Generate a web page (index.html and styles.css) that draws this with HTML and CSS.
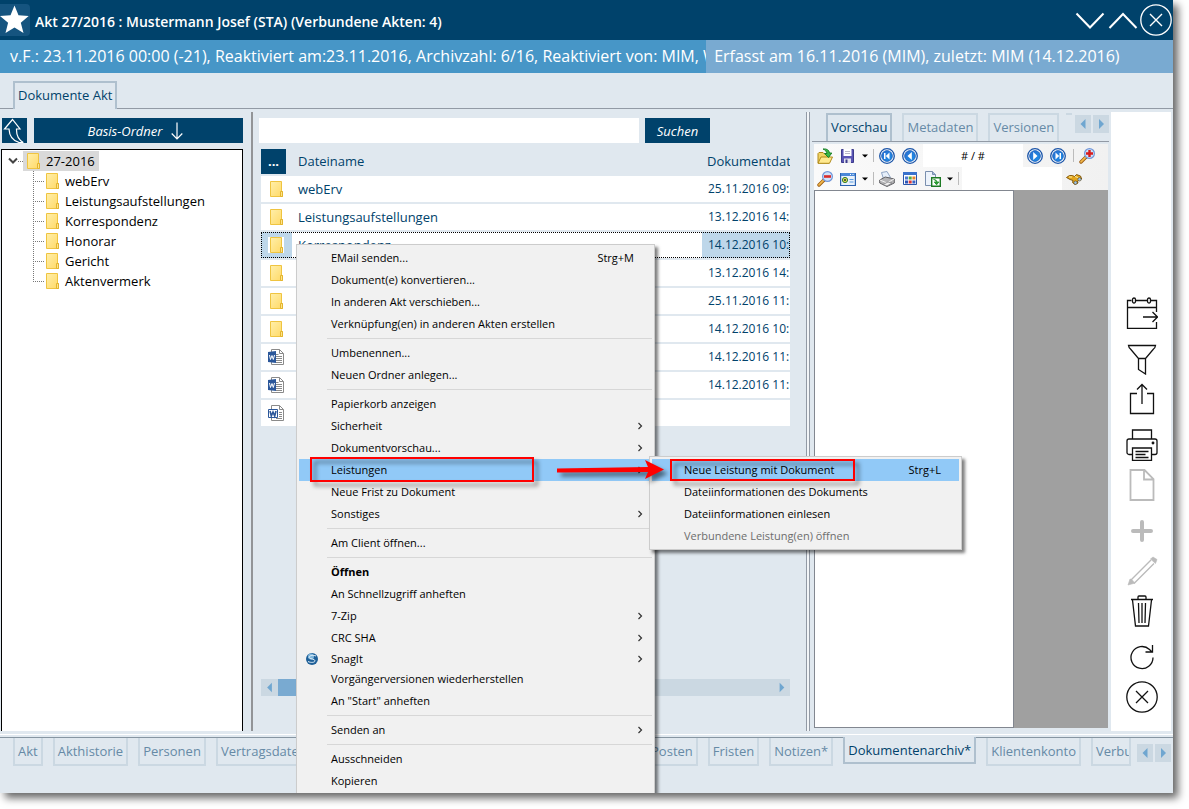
FILE: index.html
```html
<!DOCTYPE html>
<html lang="de">
<head>
<meta charset="utf-8">
<title>Akt 27/2016</title>
<link rel="stylesheet" href="styles.css">
</head>
<body>
<svg class="defs" width="0" height="0" aria-hidden="true">
  <defs>
    <linearGradient id="gFolder" x1="0" y1="0" x2="1" y2="1"><stop offset="0" stop-color="#ffefaa"/><stop offset="1" stop-color="#ffd966"/></linearGradient>
    <linearGradient id="gBlue" x1="0" y1="0" x2="1" y2="1"><stop offset="0" stop-color="#2a6fd0"/><stop offset="1" stop-color="#1c8fe8"/></linearGradient>
    <symbol id="folder" viewBox="0 0 16 16"><path d="M2.500.5h11v10h1v5h-12z" fill="url(#gFolder)" stroke="#efc440"/><path d="M12.500 15.500v-5h2v5z" fill="#ffe48a" stroke="#e3b52f"/></symbol>
    <symbol id="word" viewBox="0 0 16 16"><path d="M3.500.5h8l4 4v11h-12z" fill="#fff" stroke="#8a8a8a"/><path d="M11.500.5v4h4" fill="none" stroke="#8a8a8a"/><path d="M8 5.500h2.500M8 7.500h6M8 9.500h6M8 11.500h6M8 13.500h6" stroke="#8a8a8a"/><path d="M0 3l8-1v12l-8-1z" fill="#2b579a"/><path d="M1.500 6l1 4.500L4 6.500l1.300 4L6.500 6" fill="none" stroke="#fff"/></symbol>
    <symbol id="word2" viewBox="0 0 16 16"><path d="M3.500.5h8l4 4v11h-12z" fill="#fff" stroke="#8a8a8a"/><path d="M11.500.5v4h4" fill="none" stroke="#8a8a8a"/><path d="M11 7.500h3M11 9.500h3M11 11.500h3M8 13.500h6" stroke="#8a8a8a"/><path d="M.5 4.500h9v8h-9z" fill="#fff" stroke="#2b579a"/><path d="M2 6l1.300 5L5 7l1.700 4L8 6" fill="none" stroke="#2b579a" stroke-width="1.600"/></symbol>
    <symbol id="sub" viewBox="0 0 6 8"><path d="M1.500 1l3 3-3 3" fill="none" stroke="#333" stroke-width="1.200"/></symbol>
    <symbol id="left" viewBox="0 0 16 18"><path d="M10.500 4v10L5.500 9z" fill="#6fa6d0"/></symbol>
    <symbol id="right" viewBox="0 0 16 18"><path d="M6 4v10l5-5z" fill="#6fa6d0"/></symbol>
    <symbol id="caret" viewBox="0 0 6 4"><path d="M0 .5h6l-3 3z" fill="#000"/></symbol>
    <symbol id="ring" viewBox="0 0 16 16"><circle cx="8" cy="8" r="7.300" fill="#fff" stroke="#1a54a8" stroke-width="1.300"/><circle cx="8" cy="8" r="5.400" fill="url(#gBlue)" stroke="#1a60bd" stroke-width=".8"/></symbol>
    <symbol id="lens" viewBox="0 0 16 16"><path d="M2 14l5-5" stroke="#9a5a10" stroke-width="3.400" stroke-linecap="round"/><path d="M2 13.800l4.700-4.700" stroke="#f2b84a" stroke-width="1.800" stroke-linecap="round"/><circle cx="10.500" cy="5.500" r="4.900" fill="#cfe3fb" stroke="#7296d8" stroke-width="1.200"/></symbol>
  </defs>
</svg>
<div class="window">
  <header class="titlebar">
    <span class="star"><svg width="30" height="32" viewBox="0 0 30 32"><path d="M14.500 1.500l4 9.800 10.200.8-7.900 6.600 2.700 10.300-9-5.600-9 5.600 2.600-10.300L0 12.100l10.500-.8z" fill="#fff"/></svg></span>
    <h1 class="title">Akt 27/2016 : Mustermann Josef (STA) (Verbundene Akten: 4)</h1>
    <button class="win-btn" aria-label="Nach unten"><svg width="32" height="32" viewBox="0 0 32 32"><path d="M2.500 9.500L16 23.500l13.500-14" fill="none" stroke="#fff" stroke-width="2"/></svg></button>
    <button class="win-btn" aria-label="Nach oben"><svg width="32" height="32" viewBox="0 0 32 32"><path d="M2.500 24L16 10l13.500 14" fill="none" stroke="#fff" stroke-width="2"/></svg></button>
    <button class="win-btn" aria-label="Schließen"><svg width="32" height="32" viewBox="0 0 32 32"><circle cx="16" cy="16" r="15.200" fill="none" stroke="#fff" stroke-width="1.300"/><path d="M10 10l12 12M22 10L10 22" stroke="#fff" stroke-width="1.400"/></svg></button>
  </header>
  <div class="infobar">
    <div class="info info-file">v.F.: 23.11.2016 00:00 (-21), Reaktiviert am:23.11.2016, Archivzahl: 6/16, Reaktiviert von: MIM, W</div>
    <div class="info info-edit">Erfasst am 16.11.2016 (MIM), zuletzt: MIM (14.12.2016)</div>
  </div>
  <nav class="tabs tabs-top"><button class="tab tab-active">Dokumente Akt</button></nav>

  <main class="main">
    <section class="tree-pane">
      <div class="tree-tools">
        <button class="btn btn-up" aria-label="Übergeordneter Ordner"><svg width="25" height="25" viewBox="0 0 25 25"><path d="M10.500 1.500L2.500 11h4.500c.3 6 3.500 11.500 9.800 13.300l4.500.2c-4.500-2.500-7-7.500-6.800-13.500h3.500z" fill="none" stroke="#fff" stroke-width="1.200"/></svg></button>
        <button class="btn btn-base">Basis-Ordner <svg width="12" height="18" viewBox="0 0 12 18"><path d="M6 .5v16M.7 11.500L6 16.800l5.300-5.300" fill="none" stroke="#fff" stroke-width="1.200"/></svg></button>
      </div>
      <ul class="tree">
        <li>
          <div class="node-root"><svg width="10" height="8" viewBox="0 0 10 8"><path d="M1 1.500L5 5.500l4-4" fill="none" stroke="#444" stroke-width="2"/></svg><span class="stub"></span><span class="node-sel"><svg width="16" height="16"><use href="#folder"/></svg>27-2016</span></div>
          <ul class="branch">
            <li class="node"><svg width="16" height="16"><use href="#folder"/></svg>webErv</li>
            <li class="node"><svg width="16" height="16"><use href="#folder"/></svg>Leistungsaufstellungen</li>
            <li class="node"><svg width="16" height="16"><use href="#folder"/></svg>Korrespondenz</li>
            <li class="node"><svg width="16" height="16"><use href="#folder"/></svg>Honorar</li>
            <li class="node"><svg width="16" height="16"><use href="#folder"/></svg>Gericht</li>
            <li class="node"><svg width="16" height="16"><use href="#folder"/></svg>Aktenvermerk</li>
          </ul>
        </li>
      </ul>
    </section>
    <div class="splitter"></div>
    <section class="list-pane">
      <div class="search"><input class="search-input" type="text" aria-label="Suchbegriff"><button class="btn btn-search">Suchen</button></div>
      <table class="files">
        <colgroup><col class="col-icon"><col><col class="col-date"></colgroup>
        <thead><tr><th><button class="btn btn-more" aria-label="Spalten">...</button></th><th class="c-name">Dateiname</th><th class="c-date-head">Dokumentdat</th></tr></thead>
        <tbody>
          <tr><td class="c-icon"><svg width="16" height="16"><use href="#folder"/></svg></td><td class="c-name">webErv</td><td class="c-date">25.11.2016 09:</td></tr>
          <tr><td class="c-icon"><svg width="16" height="16"><use href="#folder"/></svg></td><td class="c-name">Leistungsaufstellungen</td><td class="c-date">13.12.2016 14:</td></tr>
          <tr class="selected"><td class="c-icon"><svg width="16" height="16"><use href="#folder"/></svg></td><td class="c-name">Korrespondenz</td><td class="c-date">14.12.2016 10:</td></tr>
          <tr><td class="c-icon"><svg width="16" height="16"><use href="#folder"/></svg></td><td class="c-name"></td><td class="c-date">13.12.2016 14:</td></tr>
          <tr><td class="c-icon"><svg width="16" height="16"><use href="#folder"/></svg></td><td class="c-name"></td><td class="c-date">25.11.2016 11:</td></tr>
          <tr><td class="c-icon"><svg width="16" height="16"><use href="#folder"/></svg></td><td class="c-name"></td><td class="c-date">14.12.2016 10:</td></tr>
          <tr><td class="c-icon"><svg width="16" height="16"><use href="#word"/></svg></td><td class="c-name"></td><td class="c-date">14.12.2016 11:</td></tr>
          <tr><td class="c-icon"><svg width="16" height="16"><use href="#word"/></svg></td><td class="c-name"></td><td class="c-date">14.12.2016 11:</td></tr>
          <tr><td class="c-icon"><svg width="16" height="16"><use href="#word2"/></svg></td><td class="c-name"></td><td class="c-date"></td></tr>
        </tbody>
      </table>
      <div class="hscroll"><button class="hs-btn" aria-label="Links"><svg width="17" height="17" viewBox="0 0 16 18"><use href="#left"/></svg></button><span class="hs-thumb"></span><button class="hs-btn" aria-label="Rechts"><svg width="17" height="17" viewBox="0 0 16 18"><use href="#right"/></svg></button></div>
    </section>
    <div class="splitter splitter-double"></div>
    <section class="preview">
      <nav class="tabs tabs-preview">
        <button class="tab tab-active">Vorschau</button><button class="tab">Metadaten</button><button class="tab">Versionen</button><span class="tab-cut"></span>
        <span class="pager"><button class="pg" aria-label="Zurück"><svg width="16" height="18"><use href="#left"/></svg></button><button class="pg" aria-label="Weiter"><svg width="16" height="18"><use href="#right"/></svg></button></span>
      </nav>
      <div class="viewer">
        <div class="tools">
          <button class="tool" aria-label="Öffnen"><svg width="16" height="16" viewBox="0 0 16 16"><path d="M1 15V5.500l1-1h4l1.500 1.500H12V15z" fill="#f2d465" stroke="#b08a1a"/><path d="M1 15.300L4 9h11.500l-3 6.300z" fill="#ffe98f" stroke="#b08a1a"/><path d="M6 1c4-.5 6 1 6.500 4h2.300L11.500 9.500 7.500 5.500H10C9.500 3.500 8.500 2 6 1z" fill="#3cb84a" stroke="#137a20" stroke-width=".9"/></svg></button>
          <button class="tool" aria-label="Speichern"><svg width="16" height="16" viewBox="0 0 16 16"><path d="M1.500 1.500h12v13h-12z" fill="#5a55b5" stroke="#3d3c8c"/><path d="M3.500 1h8v7h-8z" fill="#fff"/><path d="M5 3.500h5M5 5.500h5" stroke="#b8b8c8"/><path d="M4 10.500h7V15H4z" fill="#e4e4ee"/><path d="M5.500 11.500h2V15h-2z" fill="#3d3c8c"/></svg></button>
          <svg class="caret" width="6" height="4"><use href="#caret"/></svg><span class="sep"></span>
          <button class="tool" aria-label="Erste Seite"><svg width="16" height="16" viewBox="0 0 16 16"><use href="#ring"/><path d="M10.500 4.500v7L6.800 8zM5 5h1.500v6H5z" fill="#fff"/></svg></button>
          <button class="tool" aria-label="Vorige Seite"><svg width="16" height="16" viewBox="0 0 16 16"><use href="#ring"/><path d="M9.800 4v8L5.500 8z" fill="#fff"/></svg></button>
          <input class="page-input" value="# / #" aria-label="Seite">
          <button class="tool" aria-label="Nächste Seite"><svg width="16" height="16" viewBox="0 0 16 16"><use href="#ring"/><path d="M6.200 4v8l4.300-4z" fill="#fff"/></svg></button>
          <button class="tool" aria-label="Letzte Seite"><svg width="16" height="16" viewBox="0 0 16 16"><use href="#ring"/><path d="M5.500 4.500v7L9.200 8zM9.500 5H11v6H9.500z" fill="#fff"/></svg></button>
          <span class="sep"></span>
          <button class="tool" aria-label="Vergrößern"><svg width="16" height="16" viewBox="0 0 16 16"><use href="#lens"/><path d="M10.500 2v7M7 5.500h7" stroke="#d81c1c" stroke-width="2.400"/></svg></button>
        </div>
        <div class="tools">
          <button class="tool" aria-label="Verkleinern"><svg width="16" height="16" viewBox="0 0 16 16"><use href="#lens"/><path d="M7 5.500h7" stroke="#d82c2c" stroke-width="2.600"/></svg></button>
          <button class="tool" aria-label="Ansicht"><svg width="16" height="16" viewBox="0 0 16 16"><path d="M.6 2.500h14.800v12H.6z" fill="#e8f1fb" stroke="#2b62b0" stroke-width="1.200"/><path d="M1 2h14v3H1z" fill="#4a88d8"/><path d="M10 3.500h1M12.500 3.500h1" stroke="#fff"/><circle cx="5" cy="9" r="2.600" fill="#e8e04a" stroke="#2c7a3a"/><circle cx="5" cy="9" r="1" fill="#234"/><path d="M9.500 8.500h4M9.500 11h4" stroke="#5b9be0"/></svg></button>
          <svg class="caret" width="6" height="4"><use href="#caret"/></svg><span class="sep"></span>
          <button class="tool" aria-label="Drucken"><svg width="16" height="16" viewBox="0 0 16 16"><path d="M4.500 8L2.500 1.500 8 .5l3.500 6z" fill="#e6effa" stroke="#8fa5c4"/><path d="M.7 9l5.500-3L15.300 8v4L8 15.500.7 12z" fill="#b4b4b6" stroke="#626266"/><path d="M1 9l7 3 7-4" fill="none" stroke="#f0f0f0"/><path d="M4 13.500l5-2.500 4 1-5 3z" fill="#eee" stroke="#77777a" stroke-width=".7"/></svg></button>
          <button class="tool" aria-label="Miniaturen"><svg width="16" height="16" viewBox="0 0 16 16"><path d="M1.500 1.500h13v12h-13z" fill="#fff" stroke="#2b55a8"/><path d="M1 1h14v3H1z" fill="#3a72cc"/><path d="M3 5.500h3v3H3z" fill="#4a7ad0"/><path d="M6.700 5.500h3v3h-3z" fill="#58a83c"/><path d="M10.400 5.500h3v3h-3z" fill="#e8862c"/><path d="M3 9.500h3v3H3z" fill="#2b55b8"/><path d="M6.700 9.500h3v3h-3z" fill="#d83a3a"/><path d="M10.400 9.500h3v3h-3z" fill="#3a62c4"/></svg></button>
          <button class="tool" aria-label="Exportieren"><svg width="16" height="16" viewBox="0 0 16 16"><path d="M.5.5h7l3 3v11H.5z" fill="#edf3fb" stroke="#7a8fae"/><path d="M7.500.5v3h3" fill="#9db5d8" stroke="#7a8fae"/><path d="M6.700 6.700h8.600v8.600H6.700z" fill="#fff" stroke="#1d7a24" stroke-width="1.400"/><path d="M8.500 8.500c2 0 3 .7 3.300 2.500M9.300 11h4.500l-2.200 2.800z" fill="#2a9a32" stroke="#2a9a32"/></svg></button>
          <svg class="caret" width="6" height="4"><use href="#caret"/></svg><span class="sep"></span>
          <input class="find-input" aria-label="Suchtext">
          <button class="tool" aria-label="Suchen"><svg width="16" height="16" viewBox="0 0 16 16"><path d="M.5 6.500l3-2h3l2 1 2-2 4 1.500 1.200 3-3 1-1.200 1 .5 2-3 1.500-2.500-2 .5-2L4 8.500z" fill="#e2a51c" stroke="#7d5208" stroke-width=".9"/><circle cx="9.500" cy="11.700" r="1.700" fill="#9cc4ea" stroke="#5a4310" stroke-width=".6"/><circle cx="13.500" cy="8.300" r="1.700" fill="#9cc4ea" stroke="#5a4310" stroke-width=".6"/><path d="M3 6h3M9 5.500l3 1" stroke="#fff0a0"/></svg></button>
        </div>
        <div class="canvas"><div class="page"></div></div>
      </div>
    </section>
    <aside class="sidebar">
      <div class="side-group">
        <button class="side" aria-label="Frist"><svg width="32" height="32" viewBox="0 0 32 32"><path d="M5.500 3.500H1.500v28h29v-6.500M9.500 3.500h12M25 3.500h5.500V15M1.500 10.500h29" /><rect x="6.500" y="1" width="3" height="5" rx="1.500"/><rect x="21.500" y="1" width="3" height="5" rx="1.500"/><path d="M17 20h14M26.500 15l5 5-5 5"/></svg></button>
      </div>
      <div class="side-group">
        <button class="side" aria-label="Filter"><svg width="32" height="32" viewBox="0 0 32 32"><path d="M2.500 2.500h27c-.3 2-.8 2.800-2 3.500L19.500 15.500V31l-7-4.500v-11L4.500 6c-1.200-.9-1.800-1.800-2-3.500zM12 15.500h8"/></svg></button>
        <button class="side" aria-label="Exportieren"><svg width="32" height="32" viewBox="0 0 32 32"><path d="M11 10.500H4.500v20h23v-20H21M16 21V1.500M11 6.500l5-5 5 5"/></svg></button>
      </div>
      <div class="side-group">
        <button class="side" aria-label="Drucken"><svg width="32" height="32" viewBox="0 0 32 32"><path d="M6.500 10V1h19v9M6.500 25.500H3a2 2 0 0 1-2-2V12a2 2 0 0 1 2-2h26a2 2 0 0 1 2 2v11.500a2 2 0 0 1-2 2h-3.500M6.500 19h19v12.500h-19zM9.500 22.500h13M9.500 25.500h10M9.500 28.500h13"/><circle cx="27" cy="14" r=".8"/></svg></button>
        <button class="side side-off" aria-label="Neues Dokument" disabled><svg width="32" height="32" viewBox="0 0 32 32"><path d="M4.500 1h14l9 9v21h-23zM18 1v9.500h9.500"/></svg></button>
      </div>
      <div class="side-group">
        <button class="side side-off" aria-label="Hinzufügen" disabled><svg width="32" height="32" viewBox="0 0 32 32"><path d="M16 7v18M7 16h18" stroke-width="4" stroke-linecap="round"/></svg></button>
        <button class="side side-off" aria-label="Bearbeiten" disabled><svg width="32" height="32" viewBox="0 0 32 32"><path d="M4.500 25.500L25 5M8 28.500L28 8.500" stroke-width="1.400"/><path d="M2 30l2-6c2 .3 3.800 2 4.500 4.200zM24.500 4l2.500-2 4 2.500-1.500 4z" fill="#bbb" stroke-width=".6"/></svg></button>
        <button class="side" aria-label="Löschen"><svg width="32" height="32" viewBox="0 0 32 32"><path d="M5 4.500h22M12 4V2a1 1 0 0 1 1-1h6a1 1 0 0 1 1 1v2M6.500 5l3 26h13l3-26M12.500 8l.5 20M16 8v20M19.500 8l-.5 20"/></svg></button>
      </div>
      <div class="side-group">
        <button class="side" aria-label="Aktualisieren"><svg width="32" height="32" viewBox="0 0 32 32"><path d="M27 16.500A11 11 0 1 1 23.500 8.500L26 11M26.500 4v7h-7"/></svg></button>
        <button class="side" aria-label="Abbrechen"><svg width="32" height="32" viewBox="0 0 32 32"><circle cx="16" cy="16" r="15.200"/><path d="M10 10l12 12M22 10L10 22"/></svg></button>
      </div>
    </aside>
  </main>

  <footer class="footer">
    <nav class="tabs-bottom">
      <button class="tab">Akt</button><button class="tab">Akthistorie</button><button class="tab">Personen</button><button class="tab">Vertragsdaten</button>
      <span class="tabs-gap"></span>
      <button class="tab">Posten</button><button class="tab">Fristen</button><button class="tab">Notizen*</button><button class="tab tab-active">Dokumentenarchiv*</button><button class="tab">Klientenkonto</button><button class="tab tab-clip">Verbu</button>
      <span class="pager"><button class="pg" aria-label="Zurück"><svg width="16" height="18"><use href="#left"/></svg></button><button class="pg" aria-label="Weiter"><svg width="16" height="18"><use href="#right"/></svg></button></span>
    </nav>
  </footer>

  <div class="menu menu-main" role="menu">
    <button class="item" role="menuitem">EMail senden...<span class="key">Strg+M</span></button>
    <button class="item" role="menuitem">Dokument(e) konvertieren...</button>
    <button class="item" role="menuitem">In anderen Akt verschieben...</button>
    <button class="item" role="menuitem">Verknüpfung(en) in anderen Akten erstellen</button>
    <hr class="rule">
    <button class="item" role="menuitem">Umbenennen...</button>
    <button class="item" role="menuitem">Neuen Ordner anlegen...</button>
    <hr class="rule">
    <button class="item" role="menuitem">Papierkorb anzeigen</button>
    <button class="item" role="menuitem">Sicherheit<svg class="more" width="6" height="8"><use href="#sub"/></svg></button>
    <button class="item" role="menuitem">Dokumentvorschau...<svg class="more" width="6" height="8"><use href="#sub"/></svg></button>
    <button class="item item-on" role="menuitem">Leistungen<svg class="more" width="6" height="8"><use href="#sub"/></svg></button>
    <button class="item" role="menuitem">Neue Frist zu Dokument</button>
    <button class="item" role="menuitem">Sonstiges<svg class="more" width="6" height="8"><use href="#sub"/></svg></button>
    <hr class="rule">
    <button class="item" role="menuitem">Am Client öffnen...</button>
    <hr class="rule">
    <button class="item item-default" role="menuitem">Öffnen</button>
    <button class="item" role="menuitem">An Schnellzugriff anheften</button>
    <button class="item" role="menuitem">7-Zip<svg class="more" width="6" height="8"><use href="#sub"/></svg></button>
    <button class="item" role="menuitem">CRC SHA<svg class="more" width="6" height="8"><use href="#sub"/></svg></button>
    <button class="item item-snagit" role="menuitem"><svg class="snagit" width="12" height="12" viewBox="0 0 12 12"><circle cx="6" cy="6" r="6" fill="#1d5f98"/><circle cx="5" cy="3.500" r="3" fill="#7fb6dc"/><path d="M10 3C7 1.800 3 2.500 3.200 4.500 3.500 6.500 9 5.500 9 7.800 9 9.500 5 10 2 8.500" fill="none" stroke="#e8f4fc" stroke-width="1"/></svg>SnagIt<svg class="more" width="6" height="8"><use href="#sub"/></svg></button>
    <button class="item" role="menuitem">Vorgängerversionen wiederherstellen</button>
    <button class="item" role="menuitem">An "Start" anheften</button>
    <hr class="rule">
    <button class="item" role="menuitem">Senden an<svg class="more" width="6" height="8"><use href="#sub"/></svg></button>
    <hr class="rule">
    <button class="item" role="menuitem">Ausschneiden</button>
    <button class="item" role="menuitem">Kopieren</button>
  </div>
  <div class="menu menu-sub" role="menu">
    <button class="item item-on" role="menuitem">Neue Leistung mit Dokument<span class="key">Strg+L</span></button>
    <button class="item" role="menuitem">Dateiinformationen des Dokuments</button>
    <button class="item" role="menuitem">Dateiinformationen einlesen</button>
    <button class="item" role="menuitem" disabled>Verbundene Leistung(en) öffnen</button>
  </div>
  <div class="mark mark-item"></div>
  <div class="mark mark-sub"></div>
  <svg class="mark-arrow" width="116" height="30" viewBox="0 0 116 30"><path d="M2 13.500L93 12 90 5l19 9.500L90 24l3-7L2 17.500z" fill="#f00"/></svg>
</div>
</body>
</html>
```
FILE: styles.css
```css
* { box-sizing: border-box; }
body {
  margin: 0;
  padding: 0 16px 16px 0;
  height: 100vh;
  background: #fff;
  font: 13px/20px "Open Sans", "Noto Sans", sans-serif;
  color: #00426b;
}
button, input { font: inherit; color: inherit; border: 0; padding: 0; margin: 0; border-radius: 0; background: none; }
button { white-space: nowrap; }
svg { display: block; flex: none; }
ul { list-style: none; margin: 0; padding: 0; }
.defs { position: absolute; }

.window {
  position: relative;
  display: flex;
  flex-direction: column;
  height: 100%;
  overflow: hidden;
  background: #e0e8ef;
  box-shadow: 5px 5px 8px rgba(0, 0, 0, .6);
}

.titlebar { display: flex; align-items: center; height: 40px; padding-right: 1px; background: #00426b; color: #fff; }
.star { background: #15547f; border-radius: 0 4px 4px 0; }
.title { flex: 1; margin: 4px 0 0 5px; font-size: 14px; font-weight: 600; line-height: 20px; }
.win-btn + .win-btn { margin-left: 1px; }

.infobar { display: flex; height: 33px; color: #fff; font-size: 16px; line-height: 33px; }
.info { overflow: hidden; white-space: nowrap; }
.info-file { flex: 0 0 60.2%; padding-left: 10px; background: #4796c7; }
.info-edit { flex: 1; padding-left: 8px; background: #79aad1; }

.tab { height: 28px; padding: 0 3px; border: 2px solid #cbd8e2; color: #668aa6; }
.tab-active { border-color: #afc0ce; color: #00426b; }
.tabs { display: flex; gap: 10px; border-bottom: 1px solid #929aa5; }
.tabs .tab { padding-bottom: 2px; border-bottom: 0; }
.tabs .tab-active { margin-bottom: -1px; background: #e0e8ef; }
.tabs-top { padding: 8px 13px 0; }

.main { display: flex; flex: 1; min-height: 0; padding: 3px 2px 0 1px; }
.btn { height: 25px; background: #00426b; color: #fff; font-style: italic; }

.tree-pane { display: flex; flex-direction: column; flex: 0 0 242px; padding-top: 6px; }
.tree-tools { display: flex; gap: 7px; padding-left: 1px; margin-bottom: 6px; }
.btn-up { flex: 0 0 25px; }
.btn-base { display: flex; flex: 1; align-items: center; justify-content: center; gap: 9px; padding-right: 6px; }
.tree { flex: 1; padding-top: 1px; background: #fff; border: 1px solid #000; border-bottom: 0; color: #000; }
.node-root { display: flex; align-items: center; height: 20px; padding-left: 6px; }
.stub { width: 5px; border-top: 1px dotted #777; }
.node-sel { display: flex; align-items: center; gap: 5px; height: 20px; padding: 0 4px 0 2px; background: #d9d9d9; }
.branch { margin-left: 31px; background: linear-gradient(#777 50%, transparent 50%) 0 0 / 1px 2px repeat-y; height: 110px; }
.node { display: flex; align-items: center; height: 20px; }
.node svg { margin-right: 5px; }
.node::before { content: ""; width: 11px; border-top: 1px dotted #777; }

.splitter { flex: 0 0 2px; margin-left: 8px; background: #929497; }
.splitter-double { flex: 0 0 4px; margin-left: 16px; background: #f2f5f8; border: solid #929aa5; border-width: 0 1px; }

.list-pane { display: flex; flex-direction: column; flex: 1; min-width: 0; padding: 6px 0 0 6px; }
.search { display: flex; gap: 6px; padding-right: 80px; }
.search-input { flex: 1; min-width: 0; height: 25px; padding: 0 4px; background: #fff; }
.btn-search { flex: 0 0 65px; }
.files { table-layout: fixed; margin: 3px 0 0 2px; border-spacing: 0 2px; width: calc(100% - 2px); }
.col-icon { width: 31px; }
.col-date { width: 88px; }
.files th, .files td { height: 26px; padding: 0; text-align: left; font-weight: 400; white-space: nowrap; overflow: hidden; }
.files td { background: #fff; }
.files .c-name { padding-left: 6px; }
.files .c-icon { padding-left: 7px; }
.files .c-date { padding-left: 6px; font-size: 12px; }
.files .c-date-head { padding-left: 5px; }
.files .selected { outline: 1px dotted #000; outline-offset: -1px; }
.files .selected .c-icon, .files .selected .c-date { background: #bed7ea; }
.files .selected svg { background: #fff; }
.files .btn-more { display: block; width: 25px; font-weight: 700; font-style: normal; }
.hscroll { display: flex; height: 17px; margin: auto 0 35px 2px; background: #cbd8e2; }
.hs-btn { flex: 0 0 17px; }
.hs-thumb { width: 200px; margin-right: auto; background: #79aad1; }

.preview { display: flex; flex-direction: column; flex: 0 0 297px; min-width: 0; margin-left: 2px; }
.tabs-preview { padding: 1px 1px 0 14px; height: 30px; }
.tab-cut { flex: 0 0 6px; height: 2px; margin-left: -3px; background: #cbd8e2; }
.pager { display: flex; gap: 2px; }
.pg { width: 16px; height: 18px; background: #cbd8e2; }
.tabs-preview .pager { margin: 2px 0 0 -7px; }
.viewer { display: flex; flex: 1; flex-direction: column; margin: 2px 1px 3px 2px; }
.tools { display: flex; align-items: center; height: 23px; padding-left: 3px; background: linear-gradient(90deg, #fafafa, #f1f1f1); }
.tool { flex: none; margin-right: 7px; }
.caret { margin: 0 5px 0 -1px; }
.sep { width: 1px; height: 13px; margin-right: 5px; background: #bbb; }
.page-input { width: 100px; height: 23px; margin: 0 4px 0 -2px; background: #fff; color: #000; font-size: 11px; text-align: center; }
.find-input { width: 100px; height: 23px; margin: 0 4px 0 -2px; background: #fff; }
.canvas { flex: 1; display: flex; background: #a0a0a0; }
.page { flex: 0 0 200px; background: #fff; border: 1px solid #828790; }

.sidebar { display: flex; flex: 0 0 60px; flex-direction: column; align-items: center; justify-content: flex-end; gap: 14px; margin-left: 2px; padding: 0 0 18px 2px; background: #fff; }
.side-group { display: flex; flex-direction: column; gap: 8px; }
.side svg { fill: none; stroke: #111; stroke-width: 1.3; }
.side-off svg { stroke: #bbb; stroke-width: 1.8; }

.footer { margin-top: 3px; padding-top: 2px; border-top: 1px solid #fff; }
.tabs-bottom { display: flex; gap: 10px; height: 56px; padding: 0 2px 0 13px; border-top: 1px solid #8796a2; }
.tabs-bottom .tab { flex: none; border-top: 0; }
.tabs-bottom .tab-active { height: 27px; margin-top: -1px; background: #e0e8ef; }
.tabs-gap { flex: 1; }
.tabs-bottom .tab-clip { width: 40px; overflow: hidden; text-align: left; }
.tabs-bottom .pager { margin: 6px 0 0 -4px; }

.menu { position: absolute; padding: 2px; background: #f1f1f1; border: 1px solid #ccc; box-shadow: 3px 3px 3px rgba(0, 0, 0, .5); color: #000; font-size: 11px; }
.menu-main { left: 296px; top: 244px; width: 359px; }
.menu-sub { left: 649px; top: 456px; width: 313px; }
.item { display: flex; align-items: center; width: 100%; height: 22px; padding: 0 18px 0 32px; }
.item:disabled { color: #6d6d6d; }
.item-on { background: #91c9f7; }
.item-default { font-weight: 700; }
.item-snagit { height: 19px; padding-left: 7px; }
.snagit { margin-right: 13px; }
.key { margin-left: auto; }
.more { margin: 0 -9px 0 auto; }
.rule { height: 1px; margin: 3px 0 3px 28px; border: 0; background: #d7d7d7; }

.mark { position: absolute; border: 2px solid #f00; filter: drop-shadow(4px 4px 2px rgba(0, 0, 0, .5)); }
.mark-item { left: 310px; top: 457px; width: 224px; height: 25px; }
.mark-sub { left: 670px; top: 459px; width: 185px; height: 22px; }
.mark-arrow { position: absolute; left: 555px; top: 455px; filter: drop-shadow(4px 4px 2px rgba(0, 0, 0, .5)); }
```
